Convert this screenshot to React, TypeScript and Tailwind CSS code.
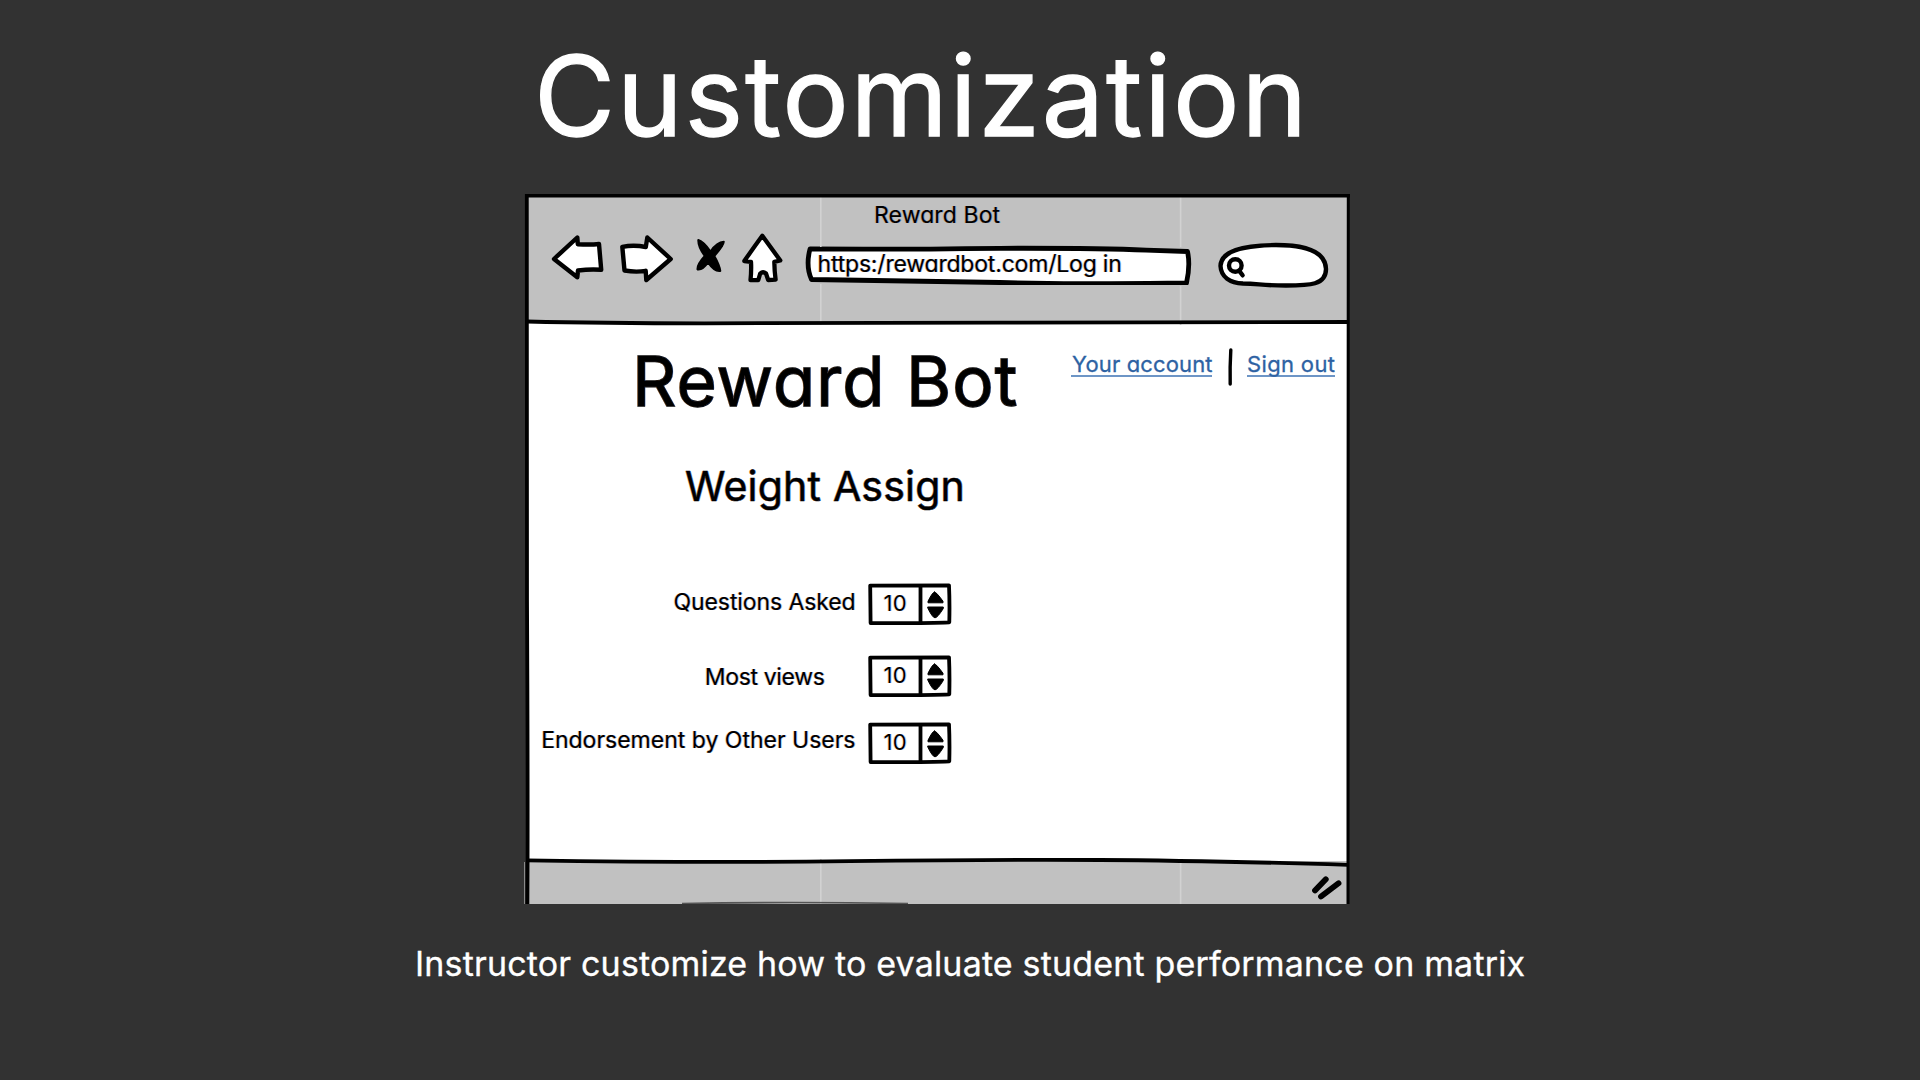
import type { ReactNode } from "react";

const sketch =
  "font-[Inter,sans-serif] [font-feature-settings:'cv11'] [paint-order:stroke_fill] whitespace-pre text-black";
const small = "text-[23px] [-webkit-text-stroke:0.2px_#000]";
const fringe = "[text-shadow:-1px_0_0_rgba(255,150,50,0.3),1px_0_0_rgba(40,120,255,0.3)]";

const ink = { stroke: "#000", strokeLinejoin: "round", strokeLinecap: "round" } as const;

function BackIcon() {
  return (
    <svg className="h-[50px] w-[54px] shrink-0" viewBox="550 235 54 50" fill="#fff" strokeWidth="4.4" {...ink}>
      <path d="M554 259 L577.3 237.5 L577.8 244.2 Q590 245 599 244 L601.2 269.8 Q590 269 578 270.5 L577.3 277.3 Z" />
    </svg>
  );
}

function ForwardIcon() {
  return (
    <svg className="h-[50px] w-[54px] shrink-0" viewBox="620 235 54 50" fill="#fff" strokeWidth="4.4" {...ink}>
      <path d="M622.3 246.8 Q634 244.5 645.8 247 L647.3 237.5 L670.7 259 L646.3 280 L645.7 270.8 Q636 272.5 624.5 270.5 Z" />
    </svg>
  );
}

function StopIcon() {
  return (
    <svg className="h-[50px] w-[34px] shrink-0" viewBox="693 235 34 50" strokeWidth="2" fill="#000" {...ink}>
      <path d="M698.3 240 Q704 242 710.5 251.5 Q717 242 723.8 241.8 Q723.5 246 714.3 256 Q719.5 265 720.3 271 Q714.5 272 708 262.5 Q702.5 270.5 697.5 269.5 Q697 264.5 704.8 256 Q698 247 698.3 240 Z" />
      <path d="M702 245 L717.3 268 M720 245.5 L700.5 266.5" strokeWidth="5.5" />
    </svg>
  );
}

function HomeIcon() {
  return (
    <svg className="h-[54px] w-[44px] shrink-0" viewBox="741 233 44 54" fill="#fff" strokeWidth="4.3" {...ink}>
      <path d="M762.3 235.8 L780.3 260.5 L774.3 261.8 Q774.5 272 775.6 279.6 L768.2 280 L766 273.5 Q763 271 760.2 273.5 L758.3 280 L750.5 280.2 Q751.5 270 751 261.8 L744.3 261 Q752 250 762.3 235.8 Z" />
    </svg>
  );
}

function AddressBar() {
  return (
    <div className="relative h-[50px] w-[390px] shrink-0">
      <svg className="absolute inset-0 h-full w-full" viewBox="803 235 390 50" fill="#fff" strokeWidth="4.8" {...ink}>
        <path d="M810 249 Q900 249.5 1000 248.3 Q1100 248 1146 250.2 L1187.5 251.5 Q1190.5 265 1186.5 283 Q1100 284.5 1000 282.5 L811.5 279.5 Q805.5 266 810 249 Z" />
      </svg>
      <div className={`${sketch} ${small} ${fringe} relative pl-[14.5px] leading-[58px] tracking-[-0.19px]`}>
        https:/rewardbot.com/Log in
      </div>
    </div>
  );
}

function SearchBox() {
  return (
    <svg className="h-[50px] w-[114px] shrink-0" viewBox="1216 240 114 50" fill="none" strokeWidth="4.4" {...ink}>
      <path
        fill="#fff"
        d="M1220.5 266 C1221 251 1242 245.5 1276 245 C1308 245 1325.5 252 1326 269 C1326 285 1310 285.5 1286 285.5 C1262 285.5 1258 283.5 1243 283.5 C1230 283 1221 277 1220.5 266 Z"
      />
      <circle cx="1235.3" cy="265.5" r="6.3" strokeWidth="4.4" />
      <path d="M1239 270.5 L1242.6 275.3" strokeWidth="4.4" />
    </svg>
  );
}

function Stepper() {
  return (
    <div className="relative flex h-[42px] w-[84px] shrink-0">
      <svg className="absolute inset-0 h-full w-full" viewBox="0 0 84 42" fill="none" strokeWidth="3.8" {...ink}>
        <path d="M2.2 2.6 L81 2.4 Q81.8 20 81.3 39.3 Q60 40.3 2.6 40 Z M52.5 3 V39" />
        <path
          strokeWidth="1"
          fill="#000"
          d="M66.5 9 Q68.5 9 75 18.3 V19.8 H60 V18.3 Q64.5 9 66.5 9 Z M60 24 H75.3 V25.5 Q69.5 34.8 67 34.8 Q64.5 34.8 60 25.5 Z"
        />
      </svg>
      <span className={`${sketch} ${fringe} relative pl-[15.5px] text-[22px] leading-[41px] tracking-[0.3px]`}>10</span>
    </div>
  );
}

function Row({ className, children }: { className: string; children: ReactNode }) {
  return (
    <div className={`flex h-[42px] items-start ${className}`}>
      <div className={`${sketch} ${small} ${fringe} flex w-[342px] shrink-0 justify-end`}>{children}</div>
      <Stepper />
    </div>
  );
}

function FrameStrokes() {
  return (
    <svg
      className="pointer-events-none absolute top-0 left-0 h-[710px] w-[828px]"
      viewBox="524 194 828 710"
      fill="none"
      strokeWidth="3.5"
      stroke="#000"
    >
      <path d="M524.5 862 V904" stroke="#8a8a8a" strokeWidth="1" />
      <path
        d="M820.8 197 V247 M820.8 284 V325 M1180.6 197 V247 M1180.6 286 V325 M820.8 859 V904 M1180.6 859 V904"
        stroke="#d2d2d2"
        strokeWidth="1.6"
      />
      <path d="M525 195.8 H1350" strokeWidth="3.4" />
      <path d="M526.8 194 Q526 400 527 600 T527.4 904" strokeWidth="3.8" />
      <path d="M1348.3 194 Q1347.8 400 1348 600 T1348 904" strokeWidth="3" />
      <path d="M527 321.5 Q620 323.8 760 323.2 T1000 322.6 T1348 322" strokeWidth="3.8" />
      <path d="M527 860.3 Q700 863 850 861.2 T1100 860 Q1200 860.5 1348 864.8" strokeWidth="3.8" />
      <path d="M682 903.6 Q790 901.5 908 903.6" stroke="#555" strokeWidth="1.6" />
      <path d="M1315 890.5 L1325.8 879.3 M1321 896.5 L1338.5 883.2" strokeWidth="5.8" strokeLinecap="round" />
    </svg>
  );
}

export default function App() {
  return (
    <main className="flex h-[1080px] w-[1920px] flex-col overflow-hidden bg-[#323232]">
      <h1 className="h-[194px] pl-[534px] font-[Inter,sans-serif] text-[111px] leading-[192px] font-normal tracking-[1.9px] whitespace-pre text-white [-webkit-text-stroke:1.3px_#fff]">
        Customization
      </h1>

      <section className="relative ml-[524px] h-[710px] w-[826px] shrink-0 overflow-hidden">
        <div className="ml-[2px] flex h-full w-[823px] flex-col bg-white">
          <header className="h-[128px] shrink-0 bg-[#c1c1c1]">
            <div className={`${sketch} ${small} ${fringe} h-[41px] pl-[348px] leading-[42px] tracking-[0.1px]`}>
              Reward Bot
            </div>
            <nav className="flex items-start pl-[24px]">
              <BackIcon />
              <div className="ml-[16px] flex shrink-0">
                <ForwardIcon />
              </div>
              <div className="ml-[19px] flex shrink-0">
                <StopIcon />
              </div>
              <div className="-mt-[2px] ml-[14px] flex shrink-0">
                <HomeIcon />
              </div>
              <div className="ml-[18px] flex shrink-0">
                <AddressBar />
              </div>
              <div className="mt-[5px] ml-[23px] flex shrink-0">
                <SearchBox />
              </div>
            </nav>
          </header>

          <div className="flex h-[118px] shrink-0 items-start">
            <h2
              className={`${sketch} w-[545px] pl-[106px] text-[69px] leading-[118px] font-normal tracking-[1.1px] [-webkit-text-stroke:1.4px_#000] ${fringe}`}
            >
              Reward Bot
            </h2>
            <div className="mt-[26px] flex h-[38px] items-start text-[#2d62a3]">
              <a className="h-[29px] w-[141px] border-b-2 border-[#6d95c6] pl-px font-[Inter,sans-serif] text-[22px] leading-[32px] tracking-[0.15px] whitespace-pre [-webkit-text-stroke:0.3px_#2d62a3] [font-feature-settings:'cv11']">
                Your account
              </a>
              <svg className="mr-[14px] ml-[15px] h-[38px] w-[6px] shrink-0" viewBox="0 0 6 38">
                <path d="M3.8 2 Q2.8 19 3.2 36" stroke="#000" strokeWidth="3.4" strokeLinecap="round" fill="none" />
              </svg>
              <a className="h-[29px] w-[88px] border-b-2 border-[#6d95c6] font-[Inter,sans-serif] text-[22px] leading-[32px] tracking-[0.35px] whitespace-pre [-webkit-text-stroke:0.3px_#2d62a3] [font-feature-settings:'cv11']">
                Sign out
              </a>
            </div>
          </div>

          <h3
            className={`${sketch} h-[143px] shrink-0 pl-[159px] text-[41px] leading-[93px] font-normal tracking-[0.2px] [-webkit-text-stroke:0.6px_#000] ${fringe}`}
          >
            Weight Assign
          </h3>

          <Row className="">
            <span className="mr-[12.5px] leading-[38px] tracking-[-0.1px]">Questions Asked</span>
          </Row>
          <Row className="mt-[30px]">
            <span className="mr-[43.5px] leading-[44px] tracking-[-0.35px]">Most views</span>
          </Row>
          <Row className="mt-[25px]">
            <span className="mr-[12.5px] leading-[36px]">Endorsement by Other Users</span>
          </Row>

          <footer className="mt-auto h-[43px] shrink-0 bg-[#c1c1c1]" />
        </div>
        <FrameStrokes />
      </section>

      <p className="pl-[415px] font-[Inter,sans-serif] text-[34px] leading-[120px] tracking-[0.17px] whitespace-pre text-white [-webkit-text-stroke:0.3px_#fff]">
        Instructor customize how to evaluate student performance on matrix
      </p>
    </main>
  );
}
